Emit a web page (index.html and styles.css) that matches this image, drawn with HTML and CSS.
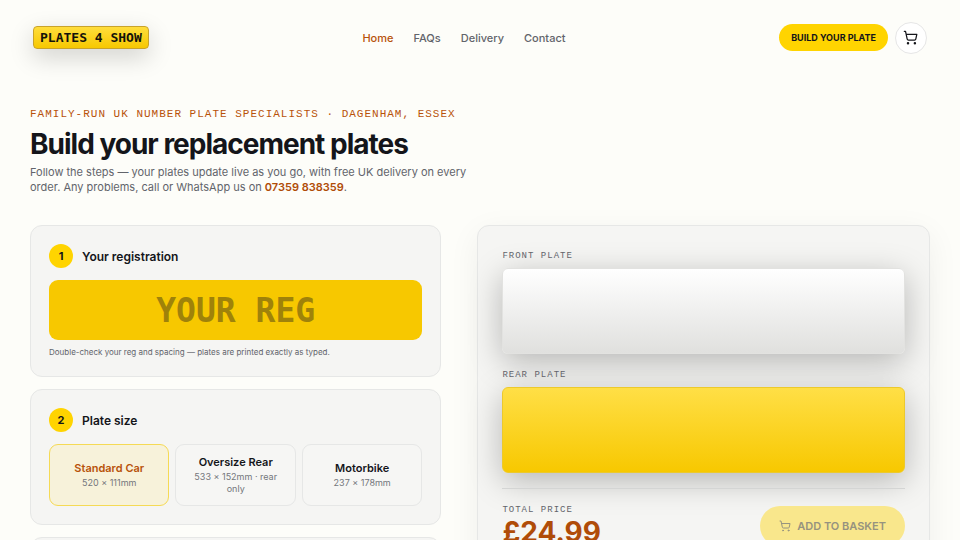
FILE: index.html
```
<!DOCTYPE html>
<html lang="en-GB">
<head>
    <meta charset="UTF-8">
    <meta name="viewport" content="width=device-width, initial-scale=1.0">
    <title>Plates 4 Show</title>
    <link rel="stylesheet" href="styles.css">
</head>
<body>
    <header class="navbar">
        <a href="#" class="logo">PLATES 4 SHOW</a>
        <nav class="nav-links">
            <a href="#" class="active">Home</a>
            <a href="#">FAQs</a>
            <a href="#">Delivery</a>
            <a href="#">Contact</a>
        </nav>
        <div class="nav-actions">
            <a href="#builder" class="build-btn">BUILD YOUR PLATE</a>
            <button type="button" class="cart-btn" aria-label="Basket">
                <svg class="cart-icon" viewBox="0 0 24 24">
                    <circle cx="8" cy="21" r="1"/>
                    <circle cx="19" cy="21" r="1"/>
                    <path d="M2.05 2.05h2l2.66 12.42a2 2 0 0 0 2 1.58h9.78a2 2 0 0 0 1.95-1.57l1.65-7.43H5.12"/>
                </svg>
            </button>
        </div>
    </header>

    <main class="page">
        <div class="intro">
            <p class="eyebrow">FAMILY-RUN UK NUMBER PLATE SPECIALISTS · DAGENHAM, ESSEX</p>
            <h1>Build your replacement plates</h1>
            <p class="lead">Follow the steps — your plates update live as you go, with free UK delivery on every order. Any problems, call or WhatsApp us on <a href="tel:07359838359">07359 838359</a>.</p>
        </div>

        <div class="builder" id="builder">
            <div class="steps">
                <section class="card">
                    <div class="card-head">
                        <span class="step">1</span>
                        <h2><label for="reg">Your registration</label></h2>
                    </div>
                    <input type="text" id="reg" class="reg-input" placeholder="YOUR REG" maxlength="8">
                    <p class="hint">Double-check your reg and spacing — plates are printed exactly as typed.</p>
                </section>

                <section class="card">
                    <div class="card-head">
                        <span class="step">2</span>
                        <h2>Plate size</h2>
                    </div>
                    <div class="options">
                        <button type="button" class="option selected">
                            <span class="option-name">Standard Car</span>
                            <span class="option-size">520 × 111mm</span>
                        </button>
                        <button type="button" class="option">
                            <span class="option-name">Oversize Rear</span>
                            <span class="option-size">533 × 152mm · rear only</span>
                        </button>
                        <button type="button" class="option">
                            <span class="option-name">Motorbike</span>
                            <span class="option-size">237 × 178mm</span>
                        </button>
                    </div>
                </section>

                <section class="card next-step"></section>
            </div>

            <aside class="preview">
                <p class="label">FRONT PLATE</p>
                <div class="plate front"></div>
                <p class="label">REAR PLATE</p>
                <div class="plate rear"></div>
                <div class="total">
                    <div>
                        <p class="label">TOTAL PRICE</p>
                        <p class="price">£24.99</p>
                    </div>
                    <button type="button" class="basket-btn" disabled>
                        <svg class="cart-icon" viewBox="0 0 24 24">
                            <circle cx="8" cy="21" r="1"/>
                            <circle cx="19" cy="21" r="1"/>
                            <path d="M2.05 2.05h2l2.66 12.42a2 2 0 0 0 2 1.58h9.78a2 2 0 0 0 1.95-1.57l1.65-7.43H5.12"/>
                        </svg>
                        ADD TO BASKET
                    </button>
                </div>
            </aside>
        </div>
    </main>
</body>
</html>
```
FILE: styles.css
```
* {
    box-sizing: border-box;
}
body {
    margin: 0;
    background-color: #fdfdf9;
    color: #14151a;
    font-family: Inter, sans-serif;
    font-size: 11px;
}
h1, h2, p {
    margin: 0;
}
a {
    text-decoration: none;
}
button {
    font-family: inherit;
    cursor: pointer;
}

/* Header */
.navbar {
    display: flex;
    justify-content: space-between;
    align-items: center;
    height: 75px;
    padding: 0 33px;
}
.logo {
    padding: 0 6px;
    border: 1px solid #c9a32a;
    border-radius: 4px;
    background: linear-gradient(#ffdd3c, #f7c800);
    box-shadow: 0 8px 24px rgba(0, 0, 0, 0.18);
    color: #14120a;
    font-family: "DejaVu Sans Mono", monospace;
    font-size: 13px;
    font-weight: bold;
    line-height: 21px;
}
.nav-links {
    display: flex;
    gap: 20px;
}
.nav-links a {
    color: #62646b;
    font-weight: 500;
}
.nav-links a.active {
    color: #b8520a;
}
.nav-actions {
    display: flex;
    align-items: center;
    gap: 7px;
}
.build-btn {
    padding: 0 12px;
    border-radius: 14px;
    background-color: #ffd400;
    color: #14151a;
    font-size: 9px;
    font-weight: 700;
    line-height: 27px;
}
.cart-btn {
    display: flex;
    justify-content: center;
    align-items: center;
    width: 32px;
    height: 32px;
    padding: 0;
    border: 1px solid #e6e6e6;
    border-radius: 50%;
    background-color: #fff;
    color: #14151a;
}
.cart-icon {
    width: 15px;
    height: 15px;
    fill: none;
    stroke: currentColor;
    stroke-width: 2;
    stroke-linecap: round;
    stroke-linejoin: round;
}

/* Intro */
.page {
    padding: 32px 30px;
}
.intro {
    max-width: 450px;
    margin-bottom: 30px;
}
.eyebrow {
    color: #b8520a;
    font-family: "Liberation Mono", monospace;
    font-size: 11px;
    letter-spacing: 1px;
    line-height: 14px;
    white-space: nowrap;
}
h1 {
    margin: 8px 0 6px;
    font-size: 28px;
    font-weight: 700;
    letter-spacing: -1px;
    line-height: 30px;
    white-space: nowrap;
}
.lead {
    max-width: 440px;
    color: #62646b;
    line-height: 15px;
}
.lead a {
    color: #b04c08;
    font-weight: 600;
}

/* Builder */
.builder {
    display: grid;
    grid-template-columns: 1fr 1.1fr;
    gap: 36px;
    align-items: start;
}
.steps {
    display: flex;
    flex-direction: column;
    gap: 12px;
}
.card {
    padding: 18px;
    border: 1px solid #e6e7e6;
    border-radius: 12px;
    background-color: #f5f5f3;
}
.next-step {
    min-height: 135px;
}
.card-head {
    display: flex;
    align-items: center;
    gap: 9px;
    margin-bottom: 12px;
}
.step {
    width: 24px;
    border-radius: 50%;
    background-color: #ffd400;
    font-weight: 700;
    line-height: 24px;
    text-align: center;
}
h2 {
    font-size: 12px;
    font-weight: 600;
}
.reg-input {
    display: block;
    width: 100%;
    height: 60px;
    padding: 0 12px;
    border: none;
    border-radius: 9px;
    background-color: #f7c800;
    color: #14120a;
    font-family: "DejaVu Sans Mono", monospace;
    font-size: 33px;
    font-weight: bold;
    text-align: center;
    text-transform: uppercase;
}
.reg-input::placeholder {
    color: #9f820a;
    opacity: 1;
}
.hint {
    margin-top: 6px;
    color: #62646b;
    font-size: 8px;
    line-height: 12px;
}
.options {
    display: grid;
    grid-template-columns: repeat(3, 1fr);
    gap: 6px;
}
.option {
    display: flex;
    flex-direction: column;
    justify-content: center;
    align-items: center;
    gap: 2px;
    padding: 10px;
    border: 1px solid #e6e7e6;
    border-radius: 9px;
    background-color: #f6f6f4;
    color: #14151a;
}
.option.selected {
    border-color: #f5da55;
    background-color: #f7f2da;
}
.option-name {
    font-size: 11px;
    font-weight: 600;
    line-height: 14px;
}
.selected .option-name {
    color: #b8520a;
}
.option-size {
    color: #74767c;
    font-size: 9px;
    line-height: 12px;
}

/* Preview */
.preview {
    padding: 24px;
    border: 1px solid #e6e7e6;
    border-radius: 12px;
    background-color: #f5f5f3;
    box-shadow: 0 8px 32px rgba(0, 0, 0, 0.06);
}
.label {
    color: #62646b;
    font-family: "Liberation Mono", monospace;
    font-size: 9px;
    letter-spacing: 1px;
    line-height: 12px;
}
.plate {
    aspect-ratio: 520 / 111;
    margin: 6px 0 15px;
    border-radius: 6px;
    box-shadow: 0 8px 32px rgba(0, 0, 0, 0.26);
}
.plate.front {
    border: 1px solid #e2e2e0;
    background: linear-gradient(#ffffff, #e0e0de);
}
.plate.rear {
    border: 1px solid #ecc92c;
    background: linear-gradient(#ffdf46, #f7c800);
}
.total {
    display: flex;
    justify-content: space-between;
    align-items: center;
    padding-top: 15px;
    border-top: 1px solid #d4d5d4;
}
.price {
    color: #b04c08;
    font-size: 28px;
    font-weight: 700;
    line-height: 32px;
}
.basket-btn {
    display: flex;
    justify-content: center;
    align-items: center;
    gap: 6px;
    height: 40px;
    padding: 0 19px;
    border: none;
    border-radius: 20px;
    background-color: #f9e78c;
    color: #96937f;
    font-size: 11px;
    font-weight: 600;
    cursor: not-allowed;
}
.basket-btn .cart-icon {
    width: 12px;
    height: 12px;
}
```
